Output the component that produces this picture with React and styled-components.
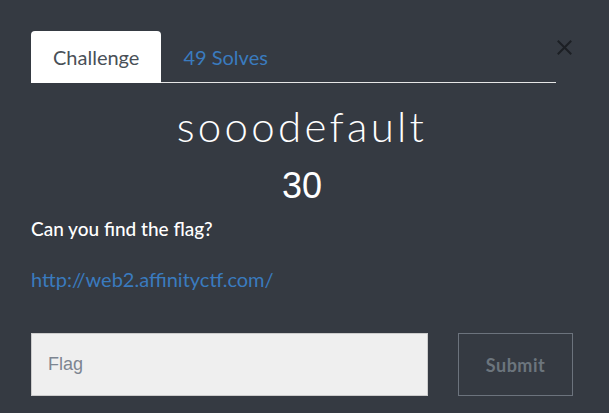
import React, { useState } from "react";
import styled, { createGlobalStyle } from "styled-components";

const GlobalStyle = createGlobalStyle`
  html, body {
    margin: 0;
    padding: 0;
    background: #353a42;
  }
  body {
    font-family: Lato, "Liberation Sans", sans-serif;
  }
`;

const Modal = styled.div`
  width: 609px;
  height: 413px;
  box-sizing: border-box;
  padding: 30px 36px 0 31px;
  background: #353a42;
  overflow: hidden;
`;

const Header = styled.div`
  display: flex;
  align-items: flex-start;
`;

const Tabs = styled.div`
  flex: 1;
  display: flex;
  align-items: flex-end;
  border-bottom: 1px solid #e6e6e6;
  height: 52px;
`;

const Tab = styled.div`
  height: 52px;
  box-sizing: border-box;
  padding: 0 22px;
  display: flex;
  align-items: center;
  font-size: 20px;
  border-radius: 4px 4px 0 0;
  margin-bottom: -1px;
  background: ${(p) => (p.$active ? "#fff" : "transparent")};
  color: ${(p) => (p.$active ? "#495057" : "#3a7bbf")};
  cursor: pointer;
`;

const Close = styled.button`
  width: 17px;
  height: 17px;
  margin: 9px 0 0 0;
  padding: 0;
  border: none;
  background: none;
  display: flex;
  align-items: center;
  justify-content: center;
  cursor: pointer;
`;

const Title = styled.h2`
  margin: 18px 0 0;
  text-align: center;
  font-family: Lato, sans-serif;
  font-weight: 300;
  font-size: 42px;
  letter-spacing: 3.3px;
  line-height: 50px;
  color: #fff;
`;

const Value = styled.h3`
  margin: 13px 0 0;
  text-align: center;
  font-family: "Liberation Sans", Arial, sans-serif;
  font-weight: 400;
  font-size: 36px;
  line-height: 44px;
  color: #fff;
`;

const Description = styled.p`
  margin: 8px 0 0;
  font-size: 19px;
  font-weight: 500;
  line-height: 26px;
  color: #fff;
`;

const Link = styled.a`
  display: block;
  margin-top: 24px;
  font-size: 20px;
  line-height: 26px;
  color: #3a7bbf;
  text-decoration: none;
`;

const Form = styled.div`
  display: flex;
  gap: 30px;
  margin-top: 41px;
`;

const FlagInput = styled.input`
  width: 397px;
  height: 63px;
  box-sizing: border-box;
  padding: 0 16px;
  background: #efefef;
  border: 1px solid #ccc;
  font-family: "Liberation Sans", Arial, sans-serif;
  font-size: 18px;
  color: #495057;
  outline: none;
  &::placeholder {
    color: #7d8591;
  }
`;

const SubmitButton = styled.button`
  width: 115px;
  height: 63px;
  box-sizing: border-box;
  background: transparent;
  border: 1px solid #6c737d;
  color: #6c757d;
  font-family: Lato, sans-serif;
  font-weight: 700;
  font-size: 18px;
  letter-spacing: 0.5px;
  cursor: pointer;
`;

const App = () => {
  const [tab, setTab] = useState("challenge");
  const [flag, setFlag] = useState("");

  return (
    <>
      <GlobalStyle />
      <Modal>
        <Header>
          <Tabs>
            <Tab $active={tab === "challenge"} onClick={() => setTab("challenge")}>
              Challenge
            </Tab>
            <Tab $active={tab === "solves"} onClick={() => setTab("solves")}>
              49 Solves
            </Tab>
          </Tabs>
          <Close aria-label="Close">
            <svg width="15" height="15" viewBox="0 0 15 15">
              <path
                d="M1.5 1.5 L13.5 13.5 M13.5 1.5 L1.5 13.5"
                stroke="#1c1f24"
                strokeWidth="2"
                strokeLinecap="square"
              />
            </svg>
          </Close>
        </Header>
        <Title>sooodefault</Title>
        <Value>30</Value>
        <Description>Can you find the flag?</Description>
        <Link href="http://web2.affinityctf.com/">http://web2.affinityctf.com/</Link>
        <Form>
          <FlagInput
            placeholder="Flag"
            value={flag}
            onChange={(e) => setFlag(e.target.value)}
          />
          <SubmitButton>Submit</SubmitButton>
        </Form>
      </Modal>
    </>
  );
};

export default App;
